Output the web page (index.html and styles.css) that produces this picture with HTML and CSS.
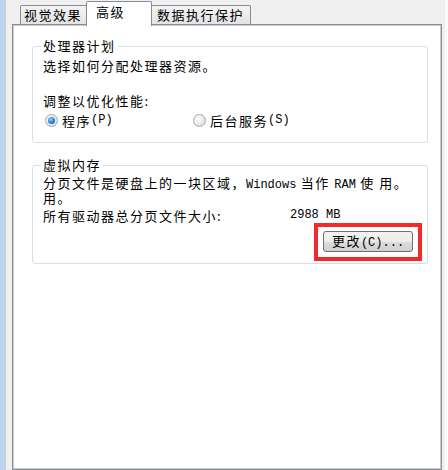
FILE: index.html
```html
<!DOCTYPE html>
<html lang="zh-CN">
<head>
<meta charset="utf-8">
<title>性能选项</title>
<link rel="stylesheet" href="styles.css">
</head>
<body>
<div class="win">
  <div class="edge"></div>
  <div class="main">
    <div class="tabs">
      <div class="tab t1">视觉效果</div>
      <div class="tab t2 active">高级</div>
      <div class="tab t3">数据执行保护</div>
    </div>
    <div class="panel">
      <fieldset class="group g1">
        <legend>处理器计划</legend>
        <div class="line l-desc">选择如何分配处理器资源。</div>
        <div class="line l-adj">调整以优化性能:</div>
        <div class="radios">
          <label class="radio r1"><span class="dot checked"></span>程序<span class="lat">(P)</span></label>
          <label class="radio r2"><span class="dot"></span>后台服务<span class="lat">(S)</span></label>
        </div>
      </fieldset>
      <fieldset class="group g2">
        <legend>虚拟内存</legend>
        <div class="line nowrap">分页文件是硬盘上的一块区域，<span class="lat">Windows</span> 当作 <span class="lat">RAM</span> 使 用。</div>
        <div class="line">用。</div>
        <div class="line size-row"><span class="size-label">所有驱动器总分页文件大小:</span><span class="lat">2988 MB</span></div>
        <div class="btn-row">
          <div class="mark"><button class="btn">更改<span class="lat">(C)...</span></button></div>
        </div>
      </fieldset>
    </div>
  </div>
  <div class="redge"></div>
</div>
</body>
</html>
```

FILE: styles.css
```css
* { box-sizing: border-box; }
html, body {
  margin: 0;
  padding: 0;
}
body {
  width: 448px;
  height: 470px;
  overflow: hidden;
  background: #f0f0f0;
  font-family: "Noto Sans CJK SC", sans-serif;
  font-size: 13px;
  letter-spacing: 1.5px;
  color: #000;
}
.win {
  display: flex;
  height: 470px;
}
.edge {
  width: 6px;
  background: linear-gradient(to right, #b5cff0 0, #c2d8f1 4px, #c9cbce 5px, #c9cbce 6px);
}
.redge {
  width: 6px;
  background: linear-gradient(to right, #f0f0f0 0, #f0f0f0 3px, #fafafa 3px);
}
.main {
  flex: 1;
  display: flex;
  flex-direction: column;
  padding-left: 6px;
}
.tabs {
  height: 24px;
  display: flex;
  align-items: flex-end;
  padding-left: 8px;
}
.tab {
  height: 19px;
  border: 1px solid #898c95;
  border-bottom: none;
  border-radius: 2px 2px 0 0;
  background: linear-gradient(#f4f4f4, #e3e3e3);
  line-height: 17px;
  white-space: nowrap;
}
.t1 { width: 67px; padding-left: 3px; }
.t2 { width: 66px; padding-left: 9px; margin-left: -1px; }
.t3 { width: 100px; padding-left: 5px; margin-left: -1px; }
.tab.active {
  height: 25px;
  margin-bottom: -2px;
  background: #fff;
  position: relative;
  z-index: 1;
  line-height: 20px;
}
.panel {
  flex: 1;
  background: #fff;
  border: 1px solid #898c95;
  box-shadow: inset 1px 1px 0 #c9cbd0, inset -1px -1px 0 #c9cbd0;
  padding: 13px 13px 0 19px;
}
.group {
  margin: 0;
  border: 1px solid #d5dfe5;
  border-radius: 3px;
  padding: 0 0 0 10px;
  min-width: 0;
}
.group legend {
  padding: 0 2px;
  margin-left: -2px;
  line-height: 16px;
}
.line {
  line-height: 15px;
  height: 15px;
}
.nowrap { white-space: nowrap; }
.lat {
  font-family: "Liberation Mono", monospace;
  font-size: 12px;
  letter-spacing: 0;
}
.g1 { padding-bottom: 14px; }
.l-desc { margin-top: 4px; }
.l-adj { margin-top: 20px; }
.radios {
  margin-top: 5px;
  display: flex;
  height: 15px;
  align-items: center;
}
.radio {
  display: flex;
  align-items: center;
  line-height: 15px;
}
.r1 { width: 150px; padding-left: 2px; }
.dot {
  width: 13px;
  height: 13px;
  border-radius: 50%;
  border: 1px solid #a5a7ab;
  background: radial-gradient(circle at 40% 35%, #ffffff 0, #e6e6e6 60%, #cfd1d4 100%);
  margin-right: 4px;
  position: relative;
  flex: none;
}
.dot.checked::after {
  content: "";
  position: absolute;
  left: 2px;
  top: 2px;
  width: 7px;
  height: 7px;
  border-radius: 50%;
  background: radial-gradient(circle at 40% 35%, #8ed0f6 0, #2b7fcf 55%, #164f96 100%);
}
.g2 {
  margin-top: 14px;
  padding-bottom: 2px;
}
.g2 legend + .line { margin-top: 2px; }
.size-row {
  margin-top: 3px;
  display: flex;
}
.size-label { width: 247px; }
.btn-row {
  display: flex;
  justify-content: flex-end;
  padding-right: 5px;
}
.mark {
  border: 4px solid #f32a2a;
  padding: 4px 5px 5px 5px;
}
.btn {
  display: block;
  width: 90px;
  height: 21px;
  padding: 0;
  margin: 0;
  border: 1px solid #707070;
  border-radius: 3px;
  background: linear-gradient(#f2f2f2 0%, #ebebeb 50%, #dddddd 51%, #cfcfcf 100%);
  font-family: "Noto Sans CJK SC", sans-serif;
  font-size: 13px;
  letter-spacing: 1.5px;
  color: #000;
  line-height: 18px;
  text-align: center;
}
```
